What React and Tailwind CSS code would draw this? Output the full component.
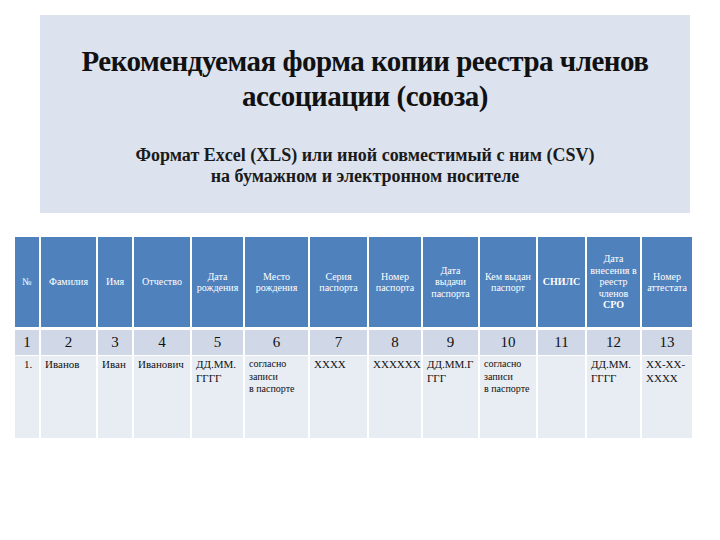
import React from "react";

const serif = { fontFamily: '"Liberation Serif", "Times New Roman", serif' };

const heads = [
  "№",
  "Фамилия",
  "Имя",
  "Отчество",
  "Дата\nрождения",
  "Место\nрождения",
  "Серия\nпаспорта",
  "Номер\nпаспорта",
  "Дата\nвыдачи\nпаспорта",
  "Кем выдан\nпаспорт",
  "СНИЛС",
  "Дата\nвнесения в\nреестр\nчленов\nСРО",
  "Номер\nаттестата",
];

const data = [
  "1.",
  "Иванов",
  "Иван",
  "Иванович",
  "ДД.ММ.\nГГГГ",
  "согласно\nзаписи\nв паспорте",
  "XXXX",
  "XXXXXX",
  "ДД.ММ.Г\nГГГ",
  "согласно\nзаписи\nв паспорте",
  "",
  "ДД.ММ.\nГГГГ",
  "XX-XX-\nXXXX",
];

export default function App() {
  return (
    <div className="w-[720px] h-[540px] bg-white overflow-hidden" style={serif}>
      <div className="ml-[40px] mt-[15px] w-[650px] h-[198px] bg-[#dce3ef] flex flex-col items-center">
        <div className="mt-[29px] text-center text-[29px] leading-[35px] font-bold text-[#111] tracking-[-0.5px]">
          Рекомендуемая форма копии реестра членов
          <br />
          ассоциации (союза)
        </div>
        <div className="mt-[31px] text-center text-[18px] leading-[21px] font-bold text-[#1a1a1a]">
          Формат Excel (XLS) или иной совместимый с ним (CSV)
          <br />
          на бумажном и электронном носителе
        </div>
      </div>
      <div className="ml-[15px] mt-[24px] w-[677px] grid grid-cols-[24px_55px_34px_56px_51px_63px_57px_52px_55px_56px_47px_53px_50px] gap-x-[2px] bg-white">
        {heads.map((h, i) => (
          <div
            key={"h" + i}
            className={
              "h-[90px] bg-[#4f81bd] text-white flex items-center justify-center text-center whitespace-pre-line text-[10px] leading-[11.5px] " +
              (i === 10 ? "font-bold" : "")
            }
          >
            {i === 11 ? (
              <span>
                Дата{"\n"}внесения в{"\n"}реестр{"\n"}членов{"\n"}
                <b>СРО</b>
              </span>
            ) : (
              h
            )}
          </div>
        ))}
        {heads.map((_, i) => (
          <div
            key={"n" + i}
            className="mt-[3px] h-[25px] bg-[#d0d8e8] flex items-center justify-center text-[15px] text-[#111]"
          >
            {i + 1}
          </div>
        ))}
        {data.map((d, i) => (
          <div
            key={"d" + i}
            className={
              "mt-[1px] h-[82px] bg-[#e8ecf3] whitespace-pre-line text-[#111] " +
              (i === 0 ? "pl-[9px] " : "pl-[4px] ") +
              (i === 5 || i === 9
                ? "pt-[2px] text-[10px] leading-[12.5px]"
                : "pt-[1px] text-[11px] leading-[14px]")
            }
          >
            {d}
          </div>
        ))}
      </div>
    </div>
  );
}
